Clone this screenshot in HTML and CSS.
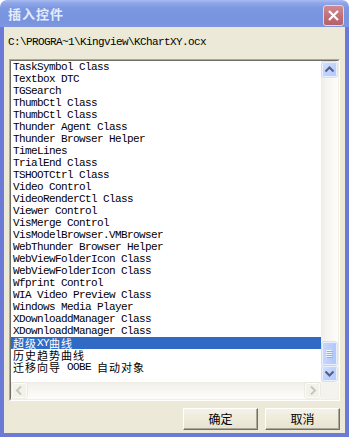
FILE: index.html
```html
<!DOCTYPE html>
<html>
<head>
<meta charset="utf-8">
<link rel="stylesheet" href="styles.css">
</head>
<body>
<div class="window">
  <div class="titlebar">
    <span class="title">插入控件</span>
    <span class="close"><svg width="13" height="13" viewBox="0 0 13 13"><path d="M2 2 L11 11 M11 2 L2 11" stroke="#fff" stroke-width="2.2" fill="none"/></svg></span>
  </div>
  <div class="body">
    <div class="path">C:\PROGRA~1\Kingview\KChartXY.ocx</div>
    <div class="listbox">
      <div class="listinner">
        <div class="listarea">
          <ul class="items">
            <li>TaskSymbol Class</li>
            <li>Textbox DTC</li>
            <li>TGSearch</li>
            <li>ThumbCtl Class</li>
            <li>ThumbCtl Class</li>
            <li>Thunder Agent Class</li>
            <li>Thunder Browser Helper</li>
            <li>TimeLines</li>
            <li>TrialEnd Class</li>
            <li>TSHOOTCtrl Class</li>
            <li>Video Control</li>
            <li>VideoRenderCtl Class</li>
            <li>Viewer Control</li>
            <li>VisMerge Control</li>
            <li>VisModelBrowser.VMBrowser</li>
            <li>WebThunder Browser Helper</li>
            <li>WebViewFolderIcon Class</li>
            <li>WebViewFolderIcon Class</li>
            <li>Wfprint Control</li>
            <li>WIA Video Preview Class</li>
            <li>Windows Media Player</li>
            <li>XDownloaddManager Class</li>
            <li>XDownloaddManager Class</li>
            <li class="selected"><span class="cjk">超级</span>XY<span class="cjk">曲线</span></li>
            <li><span class="cjk">历史趋势曲线</span></li>
            <li><span class="cjk">迁移向导</span> OOBE <span class="cjk">自动对象</span></li>
          </ul>
          <div class="vscroll">
            <span class="sbtn"><svg width="15" height="15" viewBox="0 0 15 15"><path d="M3.5 9.5 L7.5 5.5 L11.5 9.5" stroke="#4D6185" stroke-width="2" fill="none"/></svg></span>
            <div class="vtrack">
              <span class="thumb"><svg width="15" height="8" viewBox="0 0 15 8"><path d="M4 0.5 H10 M4 2.5 H10 M4 4.5 H10 M4 6.5 H10" stroke="#EEF4FE" stroke-width="1"/><path d="M5 1.5 H11 M5 3.5 H11 M5 5.5 H11 M5 7.5 H11" stroke="#8CB0F8" stroke-width="1"/></svg></span>
            </div>
            <span class="sbtn"><svg width="15" height="15" viewBox="0 0 15 15"><path d="M3.5 5.5 L7.5 9.5 L11.5 5.5" stroke="#4D6185" stroke-width="2" fill="none"/></svg></span>
          </div>
        </div>
        <div class="hscroll">
          <span class="hbtn"><svg width="15" height="15" viewBox="0 0 15 15"><path d="M9 3.5 L5 7.5 L9 11.5" stroke="#C9C7BA" stroke-width="2" fill="none"/></svg></span>
          <div class="htrack"></div>
          <span class="hbtn"><svg width="15" height="15" viewBox="0 0 15 15"><path d="M6 3.5 L10 7.5 L6 11.5" stroke="#C9C7BA" stroke-width="2" fill="none"/></svg></span>
          <span class="corner"></span>
        </div>
      </div>
    </div>
    <div class="buttons">
      <button class="btn">确定</button>
      <button class="btn">取消</button>
    </div>
  </div>
</div>
</body>
</html>
```

FILE: styles.css
```css
html, body {
  margin: 0;
  padding: 0;
  background: #ffffff;
}

.window {
  width: 349px;
  height: 437px;
  display: flex;
  flex-direction: column;
}

.titlebar {
  height: 27px;
  flex: none;
  border-radius: 7px 7px 0 0;
  background: linear-gradient(to bottom, #A8BCF0 0px, #8EA7E8 3px, #7D98E1 8px, #7893DF 20px, #7D97E0 27px);
  display: flex;
  align-items: center;
  padding: 0 5px 0 8px;
}

.title {
  flex: 1;
  color: #E4ECFA;
  font-family: "Noto Sans CJK SC", sans-serif;
  font-weight: bold;
  font-size: 13px;
  letter-spacing: 1px;
  line-height: 14px;
}

.close {
  width: 19px;
  height: 19px;
  border: 1px solid #EBD3DA;
  border-radius: 3px;
  background: linear-gradient(to bottom, #D08A92, #BE6E76 60%, #B2626A);
  display: flex;
  align-items: center;
  justify-content: center;
  margin-top: 3px;
}

.body {
  flex: 1;
  background: #ECE9D8;
  border: 4px solid #6A7AD6;
  border-top: none;
  display: flex;
  flex-direction: column;
}

.path {
  margin: 9px 0 0 4px;
  height: 12px;
  line-height: 12px;
  font-family: "Liberation Mono", monospace;
  font-size: 11px;
  letter-spacing: -0.6px;
  color: #000;
  white-space: pre;
}

.listbox {
  margin: 11px 0 0 5px;
  width: 329px;
  height: 340px;
  border-top: 1px solid #ACA899;
  border-left: 1px solid #ACA899;
  border-bottom: 1px solid #FFFFFF;
  border-right: 1px solid #FFFFFF;
}

.listinner {
  height: 338px;
  border-top: 1px solid #716F64;
  border-left: 1px solid #716F64;
  border-bottom: 1px solid #F1EFE2;
  border-right: 1px solid #F1EFE2;
  display: flex;
  flex-direction: column;
  background: #fff;
}

.listarea {
  flex: 1;
  display: flex;
  min-height: 0;
}

.items {
  flex: 1;
  margin: 0;
  padding: 0;
  list-style: none;
  background: #fff;
  font-family: "Liberation Mono", monospace;
  font-size: 11px;
  letter-spacing: -0.6px;
  color: #000;
}

.items li {
  height: 12px;
  line-height: 12px;
  padding-left: 2px;
  white-space: pre;
}

.items li.selected {
  background: #316AC5;
  color: #fff;
}

.cjk {
  display: inline-block;
  height: 12px;
  font-family: "Noto Sans CJK SC", sans-serif;
  font-size: 11px;
  letter-spacing: 1px;
  line-height: 12px;
  vertical-align: top;
}

.vscroll {
  width: 17px;
  display: flex;
  flex-direction: column;
  background: linear-gradient(to right, #EEEDE5, #F5F4EF 30%, #FDFDFA);
}

.sbtn {
  width: 15px;
  height: 15px;
  margin: 1px;
  flex: none;
  border-radius: 2px;
  background: linear-gradient(to bottom right, #D4E0FE, #C0D2FC 50%, #B3C8FA);
  box-shadow: inset 0 0 0 1px #E8EFFD, 0 0 0 0.5px #B7C8F2;
  display: block;
}

.sbtn svg, .hbtn svg, .thumb svg {
  display: block;
}

.vtrack {
  flex: 1;
  display: flex;
  flex-direction: column;
  justify-content: flex-end;
}

.thumb {
  width: 15px;
  height: 23px;
  margin: 0 1px;
  border-radius: 2px;
  background: linear-gradient(to right, #C9D7FC, #BCCEFB 50%, #B0C5FA);
  box-shadow: inset 0 0 0 1px #E8EFFD, 0 0 0 0.5px #B7C8F2;
  display: flex;
  align-items: center;
  justify-content: center;
}

.hscroll {
  height: 17px;
  flex: none;
  display: flex;
  background: linear-gradient(to bottom, #EEEDE5, #F5F4EF 30%, #FDFDFA);
}

.hbtn {
  width: 15px;
  height: 15px;
  margin: 1px;
  border-radius: 2px;
  background: #F2F1EA;
  box-shadow: inset 0 0 0 1px #FBFBF8, 0 0 0 0.5px #E2E0D4;
}

.htrack {
  flex: 1;
}

.corner {
  width: 17px;
  height: 17px;
  background: #F4F3EE;
}

.buttons {
  display: flex;
  justify-content: flex-end;
  gap: 7px;
  margin: 7px 5px 0 0;
}

.btn {
  width: 75px;
  height: 22px;
  padding: 0;
  margin: 0;
  background: linear-gradient(to bottom, #F4F2E8, #ECE9D8 60%, #E6E3D2);
  border-top: 1px solid #FFFFFF;
  border-left: 1px solid #FFFFFF;
  border-right: 1px solid #716F64;
  border-bottom: 1px solid #716F64;
  box-shadow: inset -1px -1px 0 #ACA899;
  font-family: "Noto Sans CJK SC", sans-serif;
  font-size: 12px;
  line-height: 18px;
  color: #000;
}
```
